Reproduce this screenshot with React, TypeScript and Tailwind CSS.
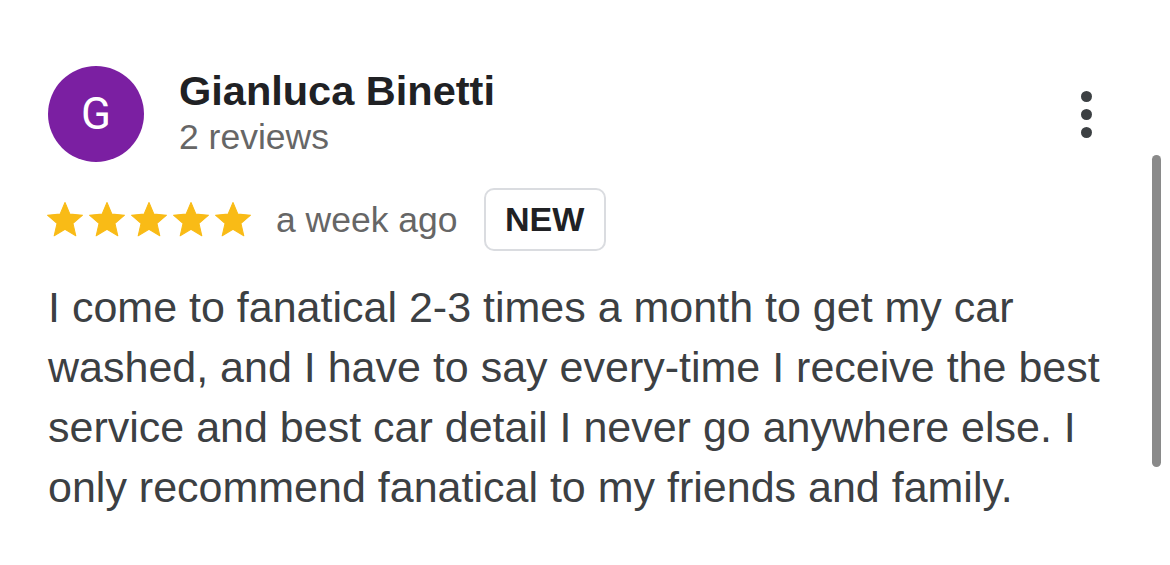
const review = {
  author: 'Gianluca Binetti',
  initial: 'G',
  reviews: 2,
  rating: 5,
  when: 'a week ago',
  text: 'I come to fanatical 2-3 times a month to get my car washed, and I have to say every-time I receive the best service and best car detail I never go anywhere else. I only recommend fanatical to my friends and family.',
};

function Star() {
  return (
    <svg viewBox="0 0 24 24" className="w-[42px] h-[42px] shrink-0" fill="#f9bb16">
      <path
        d="M12 17.27L18.18 21l-1.64-7.03L22 9.24l-7.19-.61L12 2 9.19 8.63 2 9.24l5.46 4.73L5.82 21z"
        strokeLinejoin="round"
        stroke="#f9bb16"
        strokeWidth="0.6"
      />
    </svg>
  );
}

export default function App() {
  return (
    <div className="relative w-full h-[565px] bg-white overflow-hidden font-['Liberation_Sans',Arial,sans-serif] pl-[48px] pt-[66px]">
      {/* Header */}
      <div className="flex items-start pr-[78px]">
        <div className="w-[96px] h-[96px] rounded-full bg-[#7b1fa2] flex items-center justify-center shrink-0">
          <span className="text-white text-[44px] font-['Roboto',sans-serif] leading-none">{review.initial}</span>
        </div>
        <div className="ml-[35px] mt-[1px] flex-1">
          <div className="text-[41.5px] leading-[48px] font-bold text-[#202124]">{review.author}</div>
          <div className="text-[35.5px] leading-[44px] text-[#666666]">{review.reviews} reviews</div>
        </div>
        <button className="mt-[25px] flex flex-col gap-[7px]">
          <span className="w-[11px] h-[11px] rounded-full bg-[#3c4043]" />
          <span className="w-[11px] h-[11px] rounded-full bg-[#3c4043]" />
          <span className="w-[11px] h-[11px] rounded-full bg-[#3c4043]" />
        </button>
      </div>

      {/* Rating row */}
      <div className="flex items-center mt-[26px]">
        <div className="flex -ml-[4px]">
          {Array.from({ length: review.rating }).map((_, i) => (
            <Star key={i} />
          ))}
        </div>
        <span className="ml-[22px] text-[35.5px] leading-[40px] text-[#666666]">{review.when}</span>
        <span className="ml-[26px] w-[122px] h-[63px] border-2 border-[#dadce0] rounded-[10px] flex items-center justify-center text-[34px] font-bold text-[#202124]">
          NEW
        </span>
      </div>

      {/* Body */}
      <p className="mt-[26px] w-[1080px] text-[43px] leading-[60px] text-[#3c4043]">{review.text}</p>

      {/* Overlay scrollbar */}
      <div className="absolute right-[9px] top-[155px] w-[9px] h-[312px] rounded-full bg-[#8a8a8a]" />
    </div>
  );
}
